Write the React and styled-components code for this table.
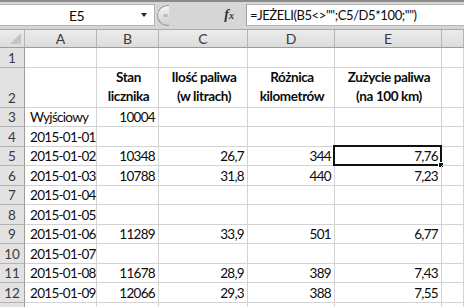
import styled, { createGlobalStyle } from 'styled-components'

const GlobalStyle = createGlobalStyle`
  html, body {
    margin: 0;
    padding: 0;
    background: #ffffff;
  }
  * {
    box-sizing: border-box;
  }
`

const FONT = `Lato, "Open Sans", "Liberation Sans", sans-serif`

const COLS = [25, 72, 62, 89, 87, 107, 22]
const ROW_HEIGHTS = [20, 40, 19, 20, 19, 20, 19, 20, 19, 20, 19, 20, 20]

const Sheet = styled.div`
  width: 464px;
  height: 307px;
  overflow: hidden;
  background: #ffffff;
  font-family: ${FONT};
  font-size: 13px;
  letter-spacing: -0.5px;
  color: #0a0a0a;
`

const FormulaBar = styled.div`
  height: 30px;
  display: flex;
  align-items: stretch;
  padding: 2px 0 3px 0;
  background: #d6d6d6;
  border-top: 2px solid #8a8a8a;
  border-bottom: 1px solid #a8a8a8;
`

const NameBox = styled.div`
  flex: 0 0 155px;
  display: flex;
  align-items: center;
  background: #ffffff;
  border: 1px solid #b4b4b4;
  border-left: none;
`

const NameText = styled.div`
  flex: 1;
  text-align: center;
  font-size: 14px;
  padding-left: 12px;
`

const DropArrow = styled.div`
  width: 0;
  height: 0;
  margin-right: 7px;
  border-left: 3px solid transparent;
  border-right: 3px solid transparent;
  border-top: 4px solid #222222;
`

const Splitter = styled.div`
  flex: 0 0 12px;
  height: 21px;
  margin: 0 0 0 2px;
  align-self: center;
  border-radius: 11px 0 0 11px;
  border: 1px solid #9a9a9a;
  border-right: none;
  background: linear-gradient(#f4f4f4, #cfcfcf);
  display: flex;
  align-items: center;
  justify-content: center;
`

const SplitterDot = styled.div`
  width: 5px;
  height: 3px;
  margin-left: 3px;
  border-radius: 2px;
  background: #bdbdbd;
`

const FxArea = styled.div`
  flex: 0 0 78px;
  display: flex;
  align-items: center;
  justify-content: flex-end;
  padding-right: 12px;
  border-right: 1px solid #a0a0a0;
`

const Fx = styled.span`
  font-family: "Liberation Serif", serif;
  font-style: italic;
  font-weight: bold;
  font-size: 14px;
  letter-spacing: 0;
  color: #333333;
`

const FxSub = styled.span`
  font-size: 10px;
`

const FormulaInput = styled.div`
  flex: 1;
  min-width: 0;
  display: flex;
  align-items: center;
  padding-left: 3px;
  background: #ffffff;
  border-top: 1px solid #b4b4b4;
  border-bottom: 1px solid #b4b4b4;
  white-space: nowrap;
  font-size: 13px;
  letter-spacing: -0.4px;
`

const Grid = styled.div`
  display: grid;
  grid-template-columns: ${COLS.map((w) => `${w}px`).join(' ')};
  grid-template-rows: 18px ${ROW_HEIGHTS.map((h) => `${h}px`).join(' ')};
`

const ColHeader = styled.div`
  display: flex;
  align-items: center;
  justify-content: center;
  background: linear-gradient(#ececec, #dcdcdc);
  border-right: 1px solid #b3b3b3;
  border-bottom: 1px solid #9c9c9c;
  color: #3a3a3a;
  font-size: 14px;
  letter-spacing: 0;
`

const Corner = styled(ColHeader)`
  position: relative;
  &::after {
    content: '';
    position: absolute;
    right: 3px;
    bottom: 3px;
    border-left: 11px solid transparent;
    border-bottom: 11px solid #c4c4c4;
  }
`

const RowHeader = styled.div`
  display: flex;
  align-items: flex-end;
  justify-content: center;
  padding-bottom: 1px;
  background: #e2e2e2;
  border-right: 1px solid #9c9c9c;
  border-bottom: 1px solid #b3b3b3;
  color: #3a3a3a;
  font-size: 13.5px;
  letter-spacing: 0;
`

const Cell = styled.div`
  position: relative;
  display: flex;
  flex-direction: column;
  justify-content: flex-end;
  align-items: ${(p) => (p.$align === 'right' ? 'flex-end' : p.$align === 'center' ? 'center' : 'flex-start')};
  padding: 0 3px 1px 5px;
  border-right: 1px solid #d3d3d3;
  border-bottom: 1px solid #d3d3d3;
  white-space: nowrap;
  font-size: 13.5px;
  letter-spacing: -0.7px;
`

const HeadLine = styled.div`
  font-weight: bold;
  line-height: 19px;
  font-size: 13.5px;
  letter-spacing: -0.4px;
`

const Selection = styled.div`
  position: absolute;
  left: -2px;
  top: -2px;
  right: -1px;
  bottom: -1px;
  border: 2px solid #111111;
  pointer-events: none;
`

const FillHandle = styled.div`
  position: absolute;
  right: -4px;
  bottom: -4px;
  width: 6px;
  height: 6px;
  background: #111111;
  border: 1px solid #ffffff;
`

const LETTERS = ['A', 'B', 'C', 'D', 'E', 'F']

const HEAD = ['', ['Stan', 'licznika'], ['Ilość paliwa', '(w litrach)'], ['Różnica', 'kilometrów'], ['Zużycie paliwa', '(na 100 km)'], '']

const ROWS = [
  { n: 1, cells: [] },
  { n: 2, head: true },
  { n: 3, cells: ['Wyjściowy', '10004'] },
  { n: 4, cells: ['2015-01-01'] },
  { n: 5, cells: ['2015-01-02', '10348', '26,7', '344', '7,76'] },
  { n: 6, cells: ['2015-01-03', '10788', '31,8', '440', '7,23'] },
  { n: 7, cells: ['2015-01-04'] },
  { n: 8, cells: ['2015-01-05'] },
  { n: 9, cells: ['2015-01-06', '11289', '33,9', '501', '6,77'] },
  { n: 10, cells: ['2015-01-07'] },
  { n: 11, cells: ['2015-01-08', '11678', '28,9', '389', '7,43'] },
  { n: 12, cells: ['2015-01-09', '12066', '29,3', '388', '7,55'] },
  { n: 13, cells: [], hidden: true },
]

function Row({ row }) {
  return (
    <>
      <RowHeader>{row.hidden ? '' : row.n}</RowHeader>
      {LETTERS.map((l, i) => {
        if (row.head) {
          const lines = HEAD[i]
          return (
            <Cell key={l} $align="center">
              {Array.isArray(lines) && lines.map((t) => <HeadLine key={t}>{t}</HeadLine>)}
            </Cell>
          )
        }
        const value = row.cells[i]
        const selected = row.n === 5 && l === 'E'
        return (
          <Cell key={l} $align={i === 0 ? 'left' : 'right'}>
            {value}
            {selected && (
              <Selection>
                <FillHandle />
              </Selection>
            )}
          </Cell>
        )
      })}
    </>
  )
}

export default function App() {
  return (
    <Sheet>
      <GlobalStyle />
      <FormulaBar>
        <NameBox>
          <NameText>E5</NameText>
          <DropArrow />
        </NameBox>
        <Splitter>
          <SplitterDot />
        </Splitter>
        <FxArea>
          <Fx>
            f<FxSub>x</FxSub>
          </Fx>
        </FxArea>
        <FormulaInput>=JEŻELI(B5&lt;&gt;"";C5/D5*100;"")</FormulaInput>
      </FormulaBar>
      <Grid>
        <Corner />
        {LETTERS.map((l) => (
          <ColHeader key={l}>{l === 'F' ? '' : l}</ColHeader>
        ))}
        {ROWS.map((row) => (
          <Row key={row.n} row={row} />
        ))}
      </Grid>
    </Sheet>
  )
}
